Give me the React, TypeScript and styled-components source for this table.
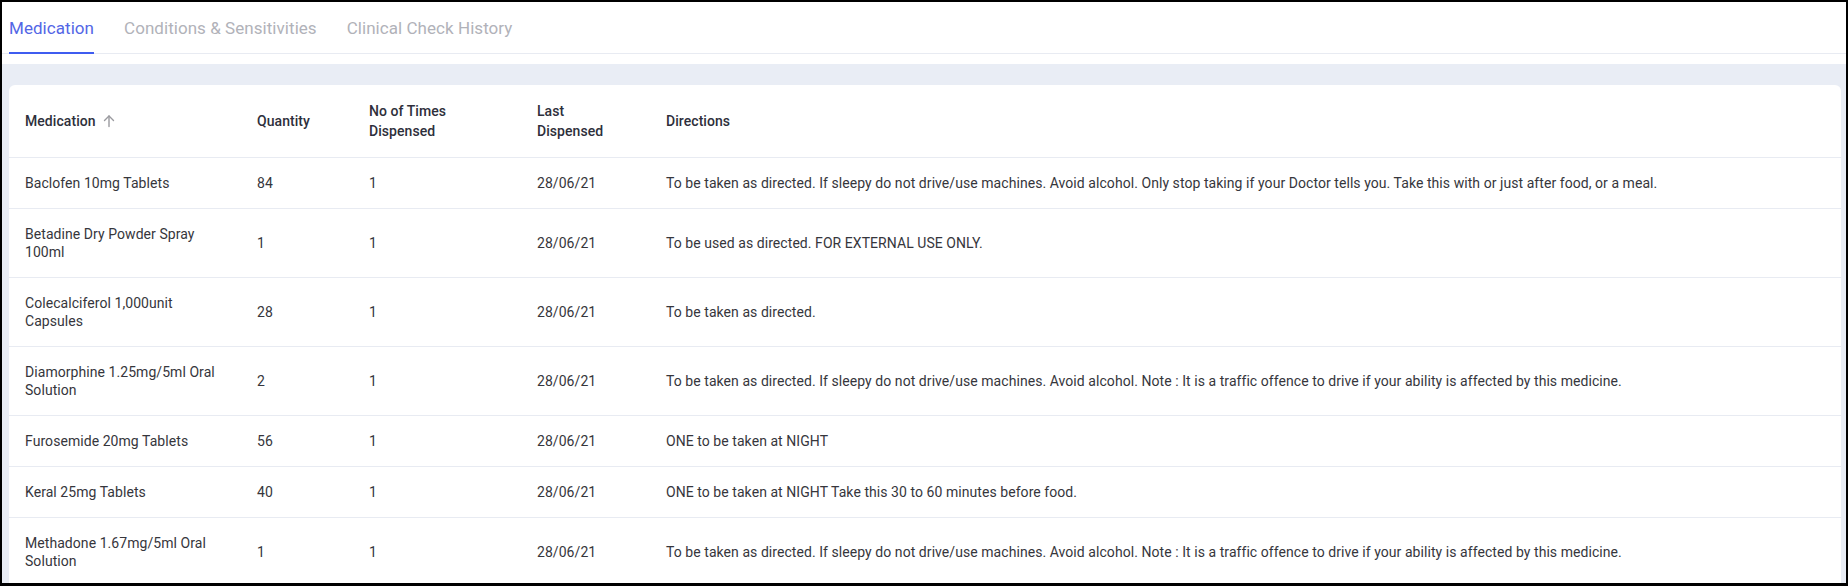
import React from "react";
import styled, { createGlobalStyle } from "styled-components";

const GlobalStyle = createGlobalStyle`
  html, body { margin: 0; padding: 0; background: #ffffff; }
  body { font-family: Roboto, "Noto Sans", "Liberation Sans", sans-serif; }
  * { box-sizing: border-box; }
`;

const Frame = styled.div`
  width: 1848px;
  height: 586px;
  border: 2px solid #000;
  border-bottom-width: 3px;
  background: #fff;
  overflow: hidden;
  display: flex;
  flex-direction: column;
`;

const TabBar = styled.div`
  display: flex;
  gap: 30px;
  padding-left: 7px;
  border-bottom: 1px solid #e8ebf2;
  flex-shrink: 0;
`;

const Tab = styled.div<{ $active?: boolean }>`
  font-size: 17px;
  line-height: 20px;
  padding: 16px 0 14px;
  margin-bottom: -1px;
  color: ${(p) => (p.$active ? "#5366e6" : "#b1b2b9")};
  border-bottom: 2px solid ${(p) => (p.$active ? "#3f5cf0" : "transparent")};
  letter-spacing: 0.05px;
`;

const Content = styled.div`
  margin-top: 10px;
  flex: 1;
  background: #e9edf5;
  padding: 21px 5px 0 7px;
  overflow: hidden;
`;

const Card = styled.div`
  background: #fff;
  border-radius: 6px 6px 0 0;
  height: 100%;
  overflow: hidden;
`;

const Table = styled.table`
  width: 100%;
  border-collapse: collapse;
  table-layout: fixed;
`;

const HeadCell = styled.th`
  text-align: left;
  vertical-align: middle;
  font-size: 14px;
  line-height: 20px;
  font-weight: 500;
  color: #2e2f3b;
  padding: 16px 26px 16px 16px;
  border-bottom: 1px solid #e8ebf2;
  letter-spacing: 0.06px;
`;

const SortLabel = styled.span`
  display: inline-flex;
  align-items: center;
  gap: 6px;
  white-space: nowrap;
`;

const Row = styled.tr`
  border-bottom: 1px solid #e8ebf2;
`;

const Cell = styled.td`
  font-size: 14px;
  line-height: 18px;
  color: #36363c;
  padding: 16px;
  vertical-align: middle;
  letter-spacing: 0.06px;
`;

const ArrowIcon = () => (
  <svg width="14" height="14" viewBox="0 0 14 14" fill="none" stroke="#9a9a9f" strokeWidth="1.4" strokeLinecap="round" strokeLinejoin="round">
    <path d="M7 12.5V2" />
    <path d="M2.5 6.5L7 2l4.5 4.5" />
  </svg>
);

const rows = [
  { name: "Baclofen 10mg Tablets", qty: "84", times: "1", last: "28/06/21", dir: "To be taken as directed. If sleepy do not drive/use machines. Avoid alcohol. Only stop taking if your Doctor tells you. Take this with or just after food, or a meal." },
  { name: "Betadine Dry Powder Spray 100ml", qty: "1", times: "1", last: "28/06/21", dir: "To be used as directed. FOR EXTERNAL USE ONLY." },
  { name: "Colecalciferol 1,000unit Capsules", qty: "28", times: "1", last: "28/06/21", dir: "To be taken as directed." },
  { name: "Diamorphine 1.25mg/5ml Oral Solution", qty: "2", times: "1", last: "28/06/21", dir: "To be taken as directed. If sleepy do not drive/use machines. Avoid alcohol. Note : It is a traffic offence to drive if your ability is affected by this medicine." },
  { name: "Furosemide 20mg Tablets", qty: "56", times: "1", last: "28/06/21", dir: "ONE to be taken at NIGHT" },
  { name: "Keral 25mg Tablets", qty: "40", times: "1", last: "28/06/21", dir: "ONE to be taken at NIGHT Take this 30 to 60 minutes before food." },
  { name: "Methadone 1.67mg/5ml Oral Solution", qty: "1", times: "1", last: "28/06/21", dir: "To be taken as directed. If sleepy do not drive/use machines. Avoid alcohol. Note : It is a traffic offence to drive if your ability is affected by this medicine." },
];

export default function App() {
  return (
    <>
      <GlobalStyle />
      <Frame>
        <TabBar>
          <Tab $active>Medication</Tab>
          <Tab>Conditions &amp; Sensitivities</Tab>
          <Tab>Clinical Check History</Tab>
        </TabBar>
        <Content>
          <Card>
            <Table>
              <colgroup>
                <col style={{ width: 232 }} />
                <col style={{ width: 112 }} />
                <col style={{ width: 168 }} />
                <col style={{ width: 129 }} />
                <col />
              </colgroup>
              <thead>
                <tr>
                  <HeadCell>
                    <SortLabel>
                      Medication <ArrowIcon />
                    </SortLabel>
                  </HeadCell>
                  <HeadCell>Quantity</HeadCell>
                  <HeadCell>No of Times Dispensed</HeadCell>
                  <HeadCell>Last Dispensed</HeadCell>
                  <HeadCell>Directions</HeadCell>
                </tr>
              </thead>
              <tbody>
                {rows.map((r) => (
                  <Row key={r.name}>
                    <Cell>{r.name}</Cell>
                    <Cell>{r.qty}</Cell>
                    <Cell>{r.times}</Cell>
                    <Cell>{r.last}</Cell>
                    <Cell>{r.dir}</Cell>
                  </Row>
                ))}
              </tbody>
            </Table>
          </Card>
        </Content>
      </Frame>
    </>
  );
}
